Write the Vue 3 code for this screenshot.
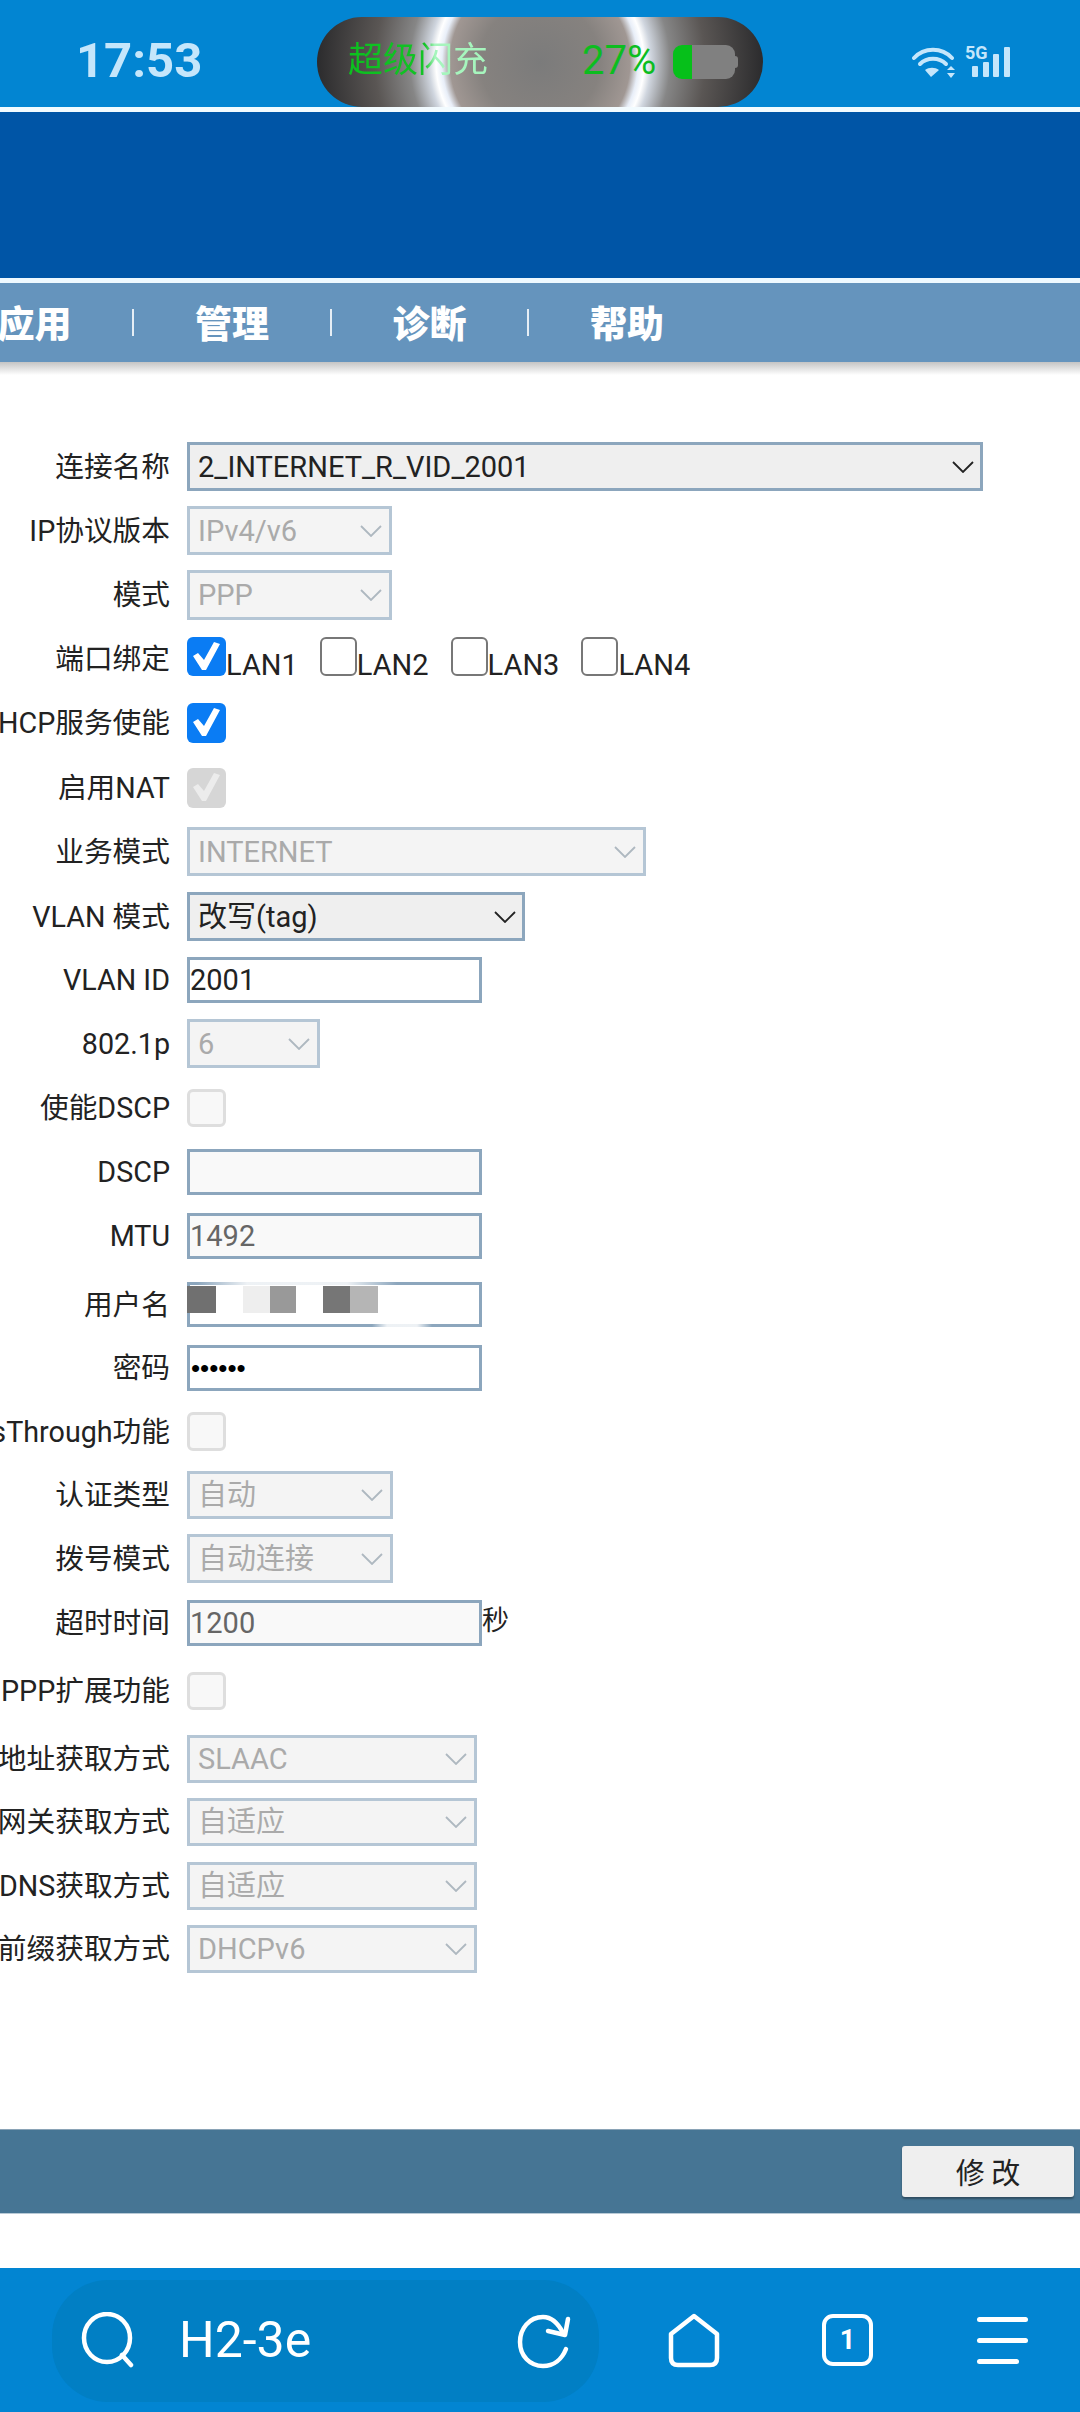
<script setup>
const menus = ['应用', '管理', '诊断', '帮助']

const rows = [
  { label: '连接名称', type: 'select', value: '2_INTERNET_R_VID_2001', w: 796, h: 49, gap: 0, on: true },
  { label: 'IP协议版本', type: 'select', value: 'IPv4/v6', w: 205, h: 49, gap: 15 },
  { label: '模式', type: 'select', value: 'PPP', w: 205, h: 50, gap: 15 },
  { label: '端口绑定', type: 'ports', h: 39, gap: 17 },
  { label: 'DHCP服务使能', type: 'check', state: 'on', h: 40, gap: 27 },
  { label: '启用NAT', type: 'check', state: 'off-on', h: 40, gap: 25 },
  { label: '业务模式', type: 'select', value: 'INTERNET', w: 459, h: 49, gap: 19 },
  { label: 'VLAN 模式', type: 'select', value: '改写(tag)', w: 338, h: 49, gap: 16, on: true },
  { label: 'VLAN ID', type: 'input', value: '2001', h: 46, gap: 16, on: true },
  { label: '802.1p', type: 'select', value: '6', w: 133, h: 49, gap: 16 },
  { label: '使能DSCP', type: 'check', state: 'off', h: 38, gap: 21 },
  { label: 'DSCP', type: 'input', value: '', h: 46, gap: 22 },
  { label: 'MTU', type: 'input', value: '1492', h: 46, gap: 18 },
  { label: '用户名', type: 'user', h: 45, gap: 23 },
  { label: '密码', type: 'password', value: '123456', h: 46, gap: 18, on: true },
  { label: 'PassThrough功能', type: 'check', state: 'off', h: 39, gap: 21 },
  { label: '认证类型', type: 'select', value: '自动', w: 206, h: 48, gap: 20 },
  { label: '拨号模式', type: 'select', value: '自动连接', w: 206, h: 49, gap: 15 },
  { label: '超时时间', type: 'input', value: '1200', unit: '秒', h: 46, gap: 17 },
  { label: 'PPP扩展功能', type: 'check', state: 'off', h: 38, gap: 26 },
  { label: 'IPv6地址获取方式', type: 'select', value: 'SLAAC', w: 290, h: 48, gap: 25 },
  { label: 'IPv6网关获取方式', type: 'select', value: '自适应', w: 290, h: 48, gap: 15 },
  { label: 'IPv6 DNS获取方式', type: 'select', value: '自适应', w: 290, h: 48, gap: 16 },
  { label: 'IPv6前缀获取方式', type: 'select', value: 'DHCPv6', w: 290, h: 48, gap: 15 }
]

const ports = [
  { name: 'LAN1', on: true },
  { name: 'LAN2', on: false },
  { name: 'LAN3', on: false },
  { name: 'LAN4', on: false }
]

const tick = 'M6 19L11 16L17 23L27 5L33 7L19 33L15 33Z'
</script>

<template>
  <div class="page">
    <div class="status">
      <span class="time">17:53</span>
      <div class="pill">
        <span class="flash">超级闪充</span>
        <span class="percent">27%</span>
        <div class="battery"><div class="battery-fill"></div></div>
      </div>
      <div class="signal">
        <svg class="wifi" width="44" height="32" viewBox="0 0 44 32" fill="none" stroke="#c5e6fb" stroke-width="4" stroke-linecap="round">
          <path d="M2 11C12 0 30 0 40 11" />
          <path d="M8 17C15 10 27 10 34 17" />
          <path d="M19 30L13 23C17 20 23 20 27 23Z" fill="#c5e6fb" stroke="none" />
          <path d="M39 19L43 23H35Z" fill="#c5e6fb" stroke="none" />
          <path d="M39 31L43 26H35Z" fill="#c5e6fb" stroke="none" />
        </svg>
        <span class="five-g">5G</span>
        <div class="bars">
          <i class="bar b1"></i><i class="bar b2"></i><i class="bar b3"></i><i class="bar b4"></i>
        </div>
      </div>
    </div>

    <div class="banner"></div>

    <div class="menu">
      <template v-for="(m, i) in menus" :key="m">
        <i v-if="i > 0" class="menu-sep"></i>
        <span class="menu-item">{{ m }}</span>
      </template>
    </div>
    <div class="menu-shade"></div>

    <form class="form" @submit.prevent>
      <div v-for="row in rows" :key="row.label" class="row" :style="{ height: row.h + 'px', marginTop: row.gap + 'px' }">
        <label class="label" :class="{ low: row.type === 'ports' }">{{ row.label }}</label>

        <div v-if="row.type === 'select'" class="select-wrap" :class="{ on: row.on }" :style="{ width: row.w + 'px' }">
          <select class="select" :disabled="!row.on">
            <option>{{ row.value }}</option>
          </select>
          <svg class="chevron" width="22" height="12" viewBox="0 0 22 12" fill="none" stroke-width="1.8">
            <path d="M1 1L11 11L21 1" />
          </svg>
        </div>

        <div v-else-if="row.type === 'ports'" class="ports">
          <div v-for="p in ports" :key="p.name" class="port">
            <span class="box" :class="p.on ? 'on' : 'blank'">
              <svg v-if="p.on" width="39" height="39" viewBox="0 0 39 39">
                <path :d="tick" fill="#fff" />
              </svg>
            </span>
            <span class="port-name">{{ p.name }}</span>
          </div>
        </div>

        <span v-else-if="row.type === 'check'" class="box" :class="row.state">
          <svg v-if="row.state !== 'off'" width="39" height="39" viewBox="0 0 39 39">
            <path :d="tick" :fill="row.state === 'on' ? '#fff' : '#ececec'" />
          </svg>
        </span>

        <div v-else-if="row.type === 'user'" class="user">
          <input class="input on" type="text" value="" />
          <i class="mosaic m1"></i><i class="mosaic m2"></i><i class="mosaic m3"></i><i class="mosaic m4"></i><i class="mosaic m5"></i>
          <i class="smear smear-top"></i><i class="smear smear-bottom"></i>
        </div>

        <input v-else-if="row.type === 'password'" class="input on secret" type="password" :value="row.value" />

        <template v-else>
          <input class="input" :class="{ on: row.on }" type="text" :value="row.value" :disabled="!row.on" />
          <span v-if="row.unit" class="unit">{{ row.unit }}</span>
        </template>
      </div>
    </form>

    <div class="actions">
      <button class="save" type="button">修 改</button>
    </div>
    <div class="spacer"></div>

    <div class="toolbar">
      <div class="address">
        <svg width="58" height="56" viewBox="0 0 58 56" fill="none" stroke="#fff" stroke-width="4.5" stroke-linecap="round">
          <ellipse cx="26" cy="26" rx="23" ry="24" />
          <path d="M41 43L50 53" />
        </svg>
        <span class="address-text">H2-3e</span>
        <svg class="reload" width="54" height="56" viewBox="0 0 54 56" fill="none" stroke="#fff" stroke-width="4.5" stroke-linecap="round" stroke-linejoin="round">
          <path d="M46 19C41 9 34 3 26 3C12 3 3 15 3 28C3 42 13 52 26 52C37 52 45 45 49 35" />
          <path d="M31 17L48 21L51 5" />
        </svg>
      </div>
      <svg class="tool home" width="56" height="58" viewBox="0 0 56 58" fill="none" stroke="#fff" stroke-width="4.5" stroke-linejoin="round">
        <path d="M28 4L51 22V46Q51 53 44 53H12Q5 53 5 46V22Z" />
      </svg>
      <div class="tool tabs">1</div>
      <div class="tool lines">
        <i class="line"></i><i class="line"></i><i class="line short"></i>
      </div>
    </div>
  </div>
</template>

<style scoped>
.page {
  width: 1080px;
  height: 2412px;
  display: flex;
  flex-direction: column;
  overflow: hidden;
  background: #fff;
  font-family: Roboto, "Noto Sans CJK SC", sans-serif;
  color: #222;
}

.status {
  height: 107px;
  flex: none;
  position: relative;
  background: #0285d2;
  border-bottom: 5px solid #f2fbff;
}
.time {
  position: absolute;
  left: 76px;
  top: 31px;
  font-size: 49px;
  line-height: 60px;
  font-weight: 700;
  color: #c5e6fb;
}
.pill {
  position: absolute;
  left: 317px;
  top: 17px;
  width: 446px;
  height: 90px;
  border-radius: 45px;
  background: radial-gradient(circle at 50% 50%, #7b7b7b 0, #86827f 60px, #a09793 90px, #e8eef8 98px, #fff 104px, #cfd5de 111px, #868686 130px, #5a5654 165px, #2a2a2c 225px);
}
.flash {
  position: absolute;
  left: 31px;
  top: 18px;
  font-size: 35px;
  line-height: 52px;
  background: linear-gradient(90deg, #0cc01f 0, #12c225 55%, #a6f5bd 62%, #a6f5bd 100%);
  -webkit-background-clip: text;
  background-clip: text;
  color: transparent;
}
.percent {
  position: absolute;
  left: 265px;
  top: 18px;
  font-size: 40px;
  line-height: 52px;
  color: #0cbd1f;
}
.battery {
  position: absolute;
  left: 356px;
  top: 28px;
  width: 62px;
  height: 34px;
  border-radius: 9px;
  background: #808080;
}
.battery::after {
  content: "";
  position: absolute;
  right: -3px;
  top: 11px;
  width: 3px;
  height: 12px;
  border-radius: 0 3px 3px 0;
  background: #808080;
}
.battery-fill {
  width: 19px;
  height: 100%;
  border-radius: 9px 0 0 9px;
  background: #06c01a;
}
.signal {
  position: absolute;
  left: 912px;
  top: 46px;
}
.wifi {
  position: absolute;
  left: 0;
  top: 1px;
}
.five-g {
  position: absolute;
  left: 53px;
  top: -3px;
  font-size: 18px;
  line-height: 20px;
  font-weight: 700;
  color: #c5e6fb;
}
.bars {
  position: absolute;
  left: 60px;
  top: 1px;
  height: 30px;
  display: flex;
  align-items: flex-end;
  gap: 4.5px;
}
.bar {
  width: 6px;
  border-radius: 1px;
  background: #c5e6fb;
}
.b1 { height: 11px; }
.b2 { height: 15px; }
.b3 { height: 23px; }
.b4 { height: 30px; }

.banner {
  height: 166px;
  flex: none;
  background: #0055a6;
  border-bottom: 5px solid #eef9ff;
}

.menu {
  height: 79px;
  flex: none;
  width: 664px;
  display: flex;
  align-items: center;
  justify-content: flex-end;
  gap: 60.75px;
  background: #6594bd;
  box-shadow: 416px 0 0 #6594bd;
}
.menu-item {
  flex: none;
  font-size: 37px;
  line-height: 50px;
  font-weight: 900;
  margin-top: -2px;
  color: #fff;
  font-family: "Noto Sans CJK SC", sans-serif;
}
.menu-sep {
  flex: none;
  width: 2px;
  height: 27px;
  background: #e6eef5;
}
.menu-shade {
  height: 13px;
  flex: none;
  background: linear-gradient(#c4c4c4, #fff);
}

.form {
  flex: 1;
  padding-top: 67px;
}
.row {
  display: flex;
  align-items: center;
}
.label {
  flex: none;
  width: 170px;
  margin-right: 17px;
  display: flex;
  justify-content: flex-end;
  font-size: 28.7px;
  line-height: 40px;
  white-space: nowrap;
}
.label.low {
  margin-top: 5px;
}

.select-wrap {
  position: relative;
  height: 100%;
}
.select {
  width: 100%;
  height: 100%;
  box-sizing: border-box;
  appearance: none;
  -webkit-appearance: none;
  border: 3px solid #b5c6d5;
  border-radius: 0;
  padding: 0 0 0 8px;
  margin: 0;
  background: #f4f4f4;
  color: #aaa;
  opacity: 1;
  font: inherit;
  font-size: 29px;
}
.select-wrap.on .select {
  border-color: #8ca6bd;
  background: #efefef;
  color: #222;
}
.chevron {
  position: absolute;
  right: 10px;
  top: 50%;
  margin-top: -6px;
  stroke: #aeb8c0;
}
.select-wrap.on .chevron {
  stroke: #222;
  right: 9px;
}

.input {
  width: 295px;
  height: 100%;
  box-sizing: border-box;
  border: 3px solid #8ca6bd;
  border-radius: 0;
  padding: 0;
  margin: 0;
  background: #f9f9f9;
  color: #666;
  opacity: 1;
  font: inherit;
  font-size: 29px;
  outline: none;
}
.input.on {
  background: #fff;
  color: #222;
}
.secret {
  font-family: "Liberation Sans", sans-serif;
  font-size: 26px;
  padding-left: 1px;
  color: #000 !important;
}
.unit {
  font-size: 27px;
  line-height: 40px;
  margin-top: -4px;
}

.user {
  position: relative;
  height: 100%;
}
.mosaic {
  position: absolute;
  top: 4px;
  height: 27px;
}
.m1 { left: 0; width: 29px; background: #707070; }
.m2 { left: 56px; width: 27px; background: #eeeeee; }
.m3 { left: 83px; width: 26px; background: #999; }
.m4 { left: 136px; width: 27px; background: #767676; }
.m5 { left: 163px; width: 28px; background: #b5b5b5; }
.smear {
  position: absolute;
  height: 3px;
  background: linear-gradient(90deg, rgba(255,255,255,0), rgba(255,255,255,.85) 25%, rgba(255,255,255,.85) 75%, rgba(255,255,255,0));
}
.smear-top { left: 10px; top: 0; width: 200px; }
.smear-bottom { left: 185px; bottom: 0; width: 60px; }

.ports {
  display: flex;
  gap: 22px;
  height: 100%;
}
.port {
  display: flex;
  align-items: flex-end;
}
.port-name {
  font-size: 29px;
  line-height: 34px;
  margin-bottom: -6px;
}
.box {
  flex: none;
  display: block;
  width: 39px;
  height: 100%;
  min-height: 38px;
  box-sizing: border-box;
  border-radius: 6px;
  overflow: hidden;
}
.box svg {
  display: block;
}
.box.on {
  background: #0a7cf4;
}
.box.off-on {
  background: #d6d6d6;
}
.box.blank {
  width: 37px;
  border: 2px solid #777;
  background: #fff;
}
.box.off {
  border: 3px solid #dedede;
  background: #f8f8f8;
}

.actions {
  height: 85px;
  flex: none;
  display: flex;
  align-items: center;
  justify-content: flex-end;
  padding-right: 6px;
  box-sizing: border-box;
  background: #467594;
  border-top: 1px solid #8aa3b6;
  border-bottom: 1px solid #b9cad6;
}
.save {
  width: 172px;
  height: 51px;
  border: none;
  border-radius: 3px;
  background: #efefef;
  box-shadow: 0 2px 2px rgba(0,0,0,.35);
  color: #222;
  font-family: "Noto Sans CJK SC", sans-serif;
  font-size: 29px;
  line-height: 1;
  padding: 0;
}
.spacer {
  height: 54px;
  flex: none;
}

.toolbar {
  height: 144px;
  flex: none;
  position: relative;
  background: #0285d2;
}
.address {
  position: absolute;
  left: 52px;
  top: 12px;
  width: 547px;
  height: 122px;
  border-radius: 56px;
  background: #017fc4;
}
.address svg {
  position: absolute;
  left: 29px;
  top: 32px;
}
.address svg.reload {
  left: 465px;
  top: 34px;
}
.address-text {
  position: absolute;
  left: 127px;
  top: 30px;
  font-size: 50px;
  line-height: 60px;
  color: #fff;
}
.tool {
  position: absolute;
}
.home {
  left: 666px;
  top: 44px;
}
.tabs {
  left: 822px;
  top: 46px;
  width: 51px;
  height: 52px;
  box-sizing: border-box;
  border: 4.5px solid #fff;
  border-radius: 11px;
  display: flex;
  align-items: center;
  justify-content: center;
  color: #fff;
  font-size: 27px;
  font-weight: 700;
}
.lines {
  left: 977px;
  top: 49px;
  width: 51px;
  display: flex;
  flex-direction: column;
  gap: 16px;
}
.line {
  display: block;
  height: 5px;
  border-radius: 3px;
  background: #fff;
}
.line.short {
  width: 42px;
}
</style>
